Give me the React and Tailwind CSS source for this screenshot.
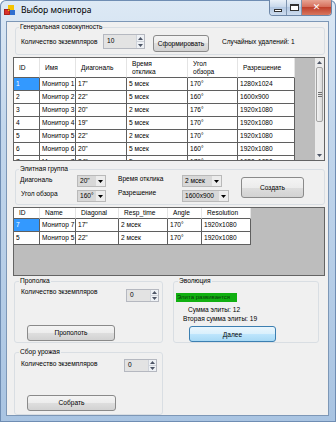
import React from "react";

const cols1 = ["w-[26px]", "w-[36px]", "w-[51px]", "w-[61px]", "w-[50px]", "w-[57px]"];
const head1 = ["ID", "Имя", "Диагональ", "Время\nотклика", "Угол\nобзора", "Разрешение"];
const rows1 = [
  ["1", "Монитор 1", "17\"", "5 мсек", "170°", "1280x1024"],
  ["2", "Монитор 2", "22\"", "5 мсек", "160°", "1600x900"],
  ["3", "Монитор 3", "20\"", "2 мсек", "176°", "1920x1080"],
  ["4", "Монитор 4", "19\"", "5 мсек", "170°", "1920x1080"],
  ["5", "Монитор 5", "22\"", "2 мсек", "170°", "1920x1080"],
  ["6", "Монитор 6", "20\"", "5 мсек", "160°", "1920x1080"],
  ["7", "Монитор 7", "24\"", "5 мсек", "176°", "1680x1050"],
];

const cols2 = ["w-[26px]", "w-[36px]", "w-[43px]", "w-[49px]", "w-[34px]", "w-[49px]"];
const head2 = ["ID", "Name", "Diagonal", "Resp_time", "Angle", "Resolution"];
const rows2 = [
  ["7", "Монитор 7", "17\"", "2 мсек", "170°", "1920x1080"],
  ["5", "Монитор 5", "22\"", "2 мсек", "170°", "1920x1080"],
];

function Up() {
  return (
    <svg width="5" height="3" viewBox="0 0 5 3">
      <path d="M0 3L2.5 0L5 3Z" fill="#4d5566" />
    </svg>
  );
}

function Down({ color = "#4d5566" }) {
  return (
    <svg width="5" height="3" viewBox="0 0 5 3">
      <path d="M0 0L2.5 3L5 0Z" fill={color} />
    </svg>
  );
}

function Btn({ className, blue, children }) {
  return (
    <div
      className={`flex items-center justify-center rounded-[3px] border text-[6.6px] text-black ${
        blue
          ? "border-[#3c7fb1] bg-[linear-gradient(#eaf6fd_0%,#d9f0fc_50%,#bee6fd_50%,#a7d9f5_100%)]"
          : "border-[#8a8a8a] bg-[linear-gradient(#f4f4f4_0%,#ececec_50%,#dedede_50%,#d2d2d2_100%)]"
      } ${className}`}
    >
      {children}
    </div>
  );
}

function Numeric({ value, className }) {
  return (
    <div className={`flex border border-[#b5b8c0] bg-[#e3e3e3] ${className}`}>
      <span className="flex flex-1 items-center pl-[3px] text-[6.6px] leading-none">{value}</span>
      <div className="flex w-[8px] flex-col border-l border-[#cfd3da] bg-[#eef1f5]">
        <div className="flex flex-1 items-center justify-center border-b border-[#cfd3da]">
          <Up />
        </div>
        <div className="flex flex-1 items-center justify-center">
          <Down />
        </div>
      </div>
    </div>
  );
}

function Combo({ value, className }) {
  return (
    <div className={`flex border border-[#b9b9b9] bg-[#ececec] ${className}`}>
      <span className="flex flex-1 items-center whitespace-nowrap bg-[#d8d8d8] pl-[2px] text-[6.6px] leading-none">{value}</span>
      <div className="flex w-[9px] items-center justify-center">
        <Down color="#000" />
      </div>
    </div>
  );
}

function Grid({ cols, head, rows, headH, className, scroll }) {
  return (
    <div className={`flex overflow-hidden border border-[#646464] bg-[#bdbdbd] ${className}`}>
      <div className="flex flex-col">
        <div className="flex">
          {head.map((h, i) => (
            <div
              key={i}
              className={`${cols[i]} ${headH} flex items-center whitespace-pre-line border-r border-b border-r-[#e4e4e4] border-b-[#5f5f5f] bg-white pl-[5px] text-[6.6px] leading-[8px]`}
            >
              {h}
            </div>
          ))}
        </div>
        {rows.map((r, ri) => (
          <div key={ri} className="flex">
            {r.map((c, ci) => (
              <div
                key={ci}
                className={`${cols[ci]} flex h-[13px] shrink-0 items-center overflow-hidden whitespace-nowrap border-r border-b border-[#5f5f5f] pl-[2px] text-[6.6px] leading-none ${
                  ri === 0 && ci === 0 ? "bg-[#3399ff] text-white" : "bg-white"
                }`}
              >
                {c}
              </div>
            ))}
          </div>
        ))}
      </div>
      <div className="flex-1" />
      {scroll && (
        <div className="flex w-[9px] flex-col bg-[#ebebeb]">
          <div className="flex h-[9px] items-center justify-center">
            <Up />
          </div>
          <div className="flex-1">
            <div className="mx-[1px] flex h-[55px] flex-col items-center justify-center gap-[1px] rounded-[2px] border border-[#a3a3a3] bg-[linear-gradient(90deg,#f2f2f2,#dadada)]">
              <div className="h-px w-[4px] bg-[#707070]" />
              <div className="h-px w-[4px] bg-[#707070]" />
              <div className="h-px w-[4px] bg-[#707070]" />
            </div>
          </div>
          <div className="flex h-[9px] items-center justify-center">
            <Down />
          </div>
        </div>
      )}
    </div>
  );
}

function Group({ title, className, legendClass = "ml-[3px]", children }) {
  return (
    <fieldset className={`rounded-[3px] border border-[#d9dee3] ${className}`}>
      <legend className={`${legendClass} px-px text-[6.6px] leading-[10px]`}>{title}</legend>
      {children}
    </fieldset>
  );
}

function TitleBar() {
  return (
    <div className="flex h-[21px] items-start">
      <svg className="ml-[4px] mt-[4px]" width="12" height="12" viewBox="0 0 12 12">
        <rect x="0" y="5" width="6" height="6" fill="#d9322a" />
        <rect x="4" y="1" width="6" height="6" fill="#f5c400" />
        <rect x="6" y="6" width="5" height="5" fill="#2f6fd0" />
        <rect x="0.5" y="5.5" width="5" height="5" fill="none" stroke="#8a1a12" strokeWidth="0.6" />
      </svg>
      <span className="ml-[5px] mt-[4px] font-['Noto_Sans',sans-serif] text-[8.5px] leading-[11px] text-black">
        Выбор монитора
      </span>
      <div className="ml-auto mr-[4px] flex h-[16px] overflow-hidden rounded-b-[4px] border border-t-0 border-[#6d87a8]">
        <div className="flex w-[17px] items-center justify-center border-r border-[#7f95b0] bg-[linear-gradient(#e9f0f8,#c5d6ea_50%,#b3c8e2_50%,#cddcee)]">
          <div className="mt-[5px] h-[3px] w-[8px] border border-[#333] bg-white" />
        </div>
        <div className="flex w-[15px] items-center justify-center border-r border-[#7f95b0] bg-[linear-gradient(#e9f0f8,#c5d6ea_50%,#b3c8e2_50%,#cddcee)]">
          <div className="h-[7px] w-[9px] border border-[#333] border-t-2 bg-white" />
        </div>
        <div className="flex w-[29px] items-center justify-center bg-[linear-gradient(#e8a493,#d46a56_50%,#c0412c_50%,#d8775f)]">
          <span className="font-['DejaVu_Sans',sans-serif] text-[9px] font-bold leading-none text-white">✕</span>
        </div>
      </div>
    </div>
  );
}

export default function App() {
  return (
    <div className="flex h-[422px] w-[336px] flex-col overflow-hidden rounded-t-[6px] bg-[linear-gradient(180deg,#dde9f5_0%,#c3d7ec_30%,#a9c4e2_100%)] font-['Liberation_Sans',Arial,sans-serif] text-black shadow-[inset_0_0_0_1px_#6f8db3]">
      <TitleBar />
      <div className="flex">
        <div className="w-[6px]" />
        <div className="flex h-[395px] w-[323px] flex-col border border-[#7d97b6] bg-[#f0f0f0]">
          <Group title="Генеральная совокупность" className="ml-[8px] h-[33px] w-[310px]">
            <div className="flex items-start">
              <span className="ml-[5px] mt-[5px] w-[82px] text-[6.6px] leading-[10px]">Количество экземпляров</span>
              <Numeric value="10" className="mt-[2px] h-[15px] w-[42px]" />
              <Btn className="ml-[8px] mt-[3px] h-[17px] w-[56px]">Сформировать</Btn>
              <span className="ml-[13px] mt-[5px] text-[6.6px] leading-[10px]">Случайных удалений: 1</span>
            </div>
          </Group>

          <Grid
            cols={cols1}
            head={head1}
            rows={rows1}
            headH="h-[20px]"
            scroll
            className="ml-[6px] mt-[2px] h-[104px] w-[312px]"
          />

          <Group title="Элитная группа" className="ml-[8px] mt-[3px] h-[41px] w-[310px]">
            <div className="flex items-start">
              <div className="ml-[4px] flex w-[57px] flex-col text-[6.6px] leading-[10px]">
                <span className="mt-[1px]">Диагональ</span>
                <span className="ml-px mt-[4px]">Угол обзора</span>
              </div>
              <div className="flex w-[29px] flex-col">
                <Combo value={"20\""} className="mt-[1px] h-[12px] w-[29px]" />
                <Combo value="160°" className="mt-[3px] h-[12px] w-[29px]" />
              </div>
              <div className="ml-[12px] flex w-[64px] flex-col text-[6.6px] leading-[10px]">
                <span>Время отклика</span>
                <span className="mt-[4px]">Разрешение</span>
              </div>
              <div className="flex w-[47px] flex-col">
                <Combo value="2 мсек" className="mt-[1px] h-[12px] w-[40px]" />
                <Combo value="1600x900" className="mt-[3px] h-[12px] w-[47px]" />
              </div>
              <Btn className="ml-[12px] mt-[3px] h-[21px] w-[63px]">Создать</Btn>
            </div>
          </Group>

          <Grid
            cols={cols2}
            head={head2}
            rows={rows2}
            headH="h-[11px]"
            className="ml-[6px] mt-[2px] h-[69px] w-[312px]"
          />

          <div className="flex items-start">
            <div className="ml-[7px] flex w-[149px] flex-col">
              <Group title="Прополка" className="h-[67px] w-[149px]" legendClass="ml-[4px]">
                <div className="flex items-start">
                  <span className="ml-[6px] mt-px w-[105px] text-[6.6px] leading-[10px]">Количество экземпляров</span>
                  <Numeric value="0" className="mt-[3px] h-[13px] w-[33px]" />
                </div>
                <Btn className="ml-[12px] mt-[23px] h-[16px] w-[88px]">Прополоть</Btn>
              </Group>
              <Group title="Сбор урожая" className="mt-[4px] h-[68px] w-[149px]" legendClass="ml-[4px]">
                <div className="flex items-start">
                  <span className="ml-[6px] mt-[2px] w-[103px] text-[6.6px] leading-[10px]">Количество экземпляров</span>
                  <Numeric value="0" className="mt-[2px] h-[13px] w-[33px]" />
                </div>
                <Btn className="ml-[12px] mt-[23px] h-[16px] w-[89px]">Собрать</Btn>
              </Group>
            </div>
            <Group title="Эволюция" className="ml-[10px] h-[67px] w-[146px]" legendClass="ml-[4px]">
              <div className="flex flex-col items-start text-[6.6px] leading-[9px]">
                <span className="ml-[2px] mt-[7px] flex h-[9px] w-[61px] items-center whitespace-nowrap bg-[#11b011] pl-[1px] text-[6px] text-[#0a3d0a]">
                  Элита развивается
                </span>
                <span className="ml-[14px] mt-[3px]">Сумма элиты: 12</span>
                <span className="ml-[9px]">Вторая сумма элиты: 19</span>
                <Btn blue className="ml-[15px] mt-[3px] h-[16px] w-[87px]">
                  Далее
                </Btn>
              </div>
            </Group>
          </div>
        </div>
        <div className="w-[7px]" />
      </div>
    </div>
  );
}
